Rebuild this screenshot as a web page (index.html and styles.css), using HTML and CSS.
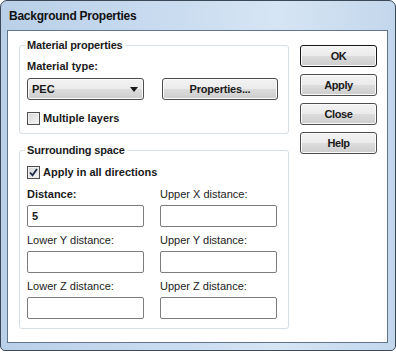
FILE: index.html
```html
<!DOCTYPE html>
<html lang="en">
<head>
<meta charset="UTF-8" />
<title>Background Properties</title>
<link rel="stylesheet" href="styles.css">
</head>
<body>
  <div class="window">
    <div class="titlebar">Background Properties</div>
    <div class="client">
      <div class="groups">
        <fieldset class="group group-material">
          <legend>Material properties</legend>
          <div class="label bold">Material type:</div>
          <div class="row">
            <div class="combo">
              <span>PEC</span>
              <svg width="8" height="5" viewBox="0 0 8 5"><path d="M0 0h8L4 5z" fill="#1a1a1a"/></svg>
            </div>
            <button class="btn btn-wide">Properties...</button>
          </div>
          <label class="check-row"><span class="check"></span>Multiple layers</label>
        </fieldset>

        <fieldset class="group group-space">
          <legend>Surrounding space</legend>
          <label class="check-row">
            <span class="check">
              <svg width="9" height="9" viewBox="0 0 9 9"><path d="M1 4.5l2.5 2.8L8 1" fill="none" stroke="#1c2a4a" stroke-width="1.8"/></svg>
            </span>Apply in all directions
          </label>
          <div class="fields">
            <div class="field">
              <div class="label bold">Distance:</div>
              <input type="text" class="edit" value="5">
            </div>
            <div class="field">
              <div class="label">Upper X distance:</div>
              <input type="text" class="edit">
            </div>
            <div class="field">
              <div class="label">Lower Y distance:</div>
              <input type="text" class="edit">
            </div>
            <div class="field">
              <div class="label">Upper Y distance:</div>
              <input type="text" class="edit">
            </div>
            <div class="field">
              <div class="label">Lower Z distance:</div>
              <input type="text" class="edit">
            </div>
            <div class="field">
              <div class="label">Upper Z distance:</div>
              <input type="text" class="edit">
            </div>
          </div>
        </fieldset>
      </div>

      <div class="actions">
        <button class="btn btn-default">OK</button>
        <button class="btn">Apply</button>
        <button class="btn">Close</button>
        <button class="btn">Help</button>
      </div>
    </div>
  </div>
</body>
</html>
```

FILE: styles.css
```css
* {
  box-sizing: border-box;
}
body {
  margin: 0;
  background: #fff;
  font-family: "Liberation Sans", Arial, sans-serif;
  font-size: 11px;
  color: #1a1a1a;
}

/* Window frame */
.window {
  width: 396px;
  height: 351px;
  border: 1px solid #3b4858;
  border-radius: 7px 7px 5px 5px;
  background: linear-gradient(90deg, #b9d0e8 0%, #cadcf0 45%, #d6e5f4 70%, #c3d7ec 100%);
  padding: 0 7px 7px 6px;
}
.titlebar {
  height: 29px;
  padding: 8px 0 0 2px;
  font-size: 12px;
  font-weight: bold;
  letter-spacing: -0.25px;
  line-height: 15px;
  color: #111;
}
.client {
  height: 313px;
  border: 1px solid #5f738a;
  background: #fff;
  display: flex;
  padding: 7px 0 0 11px;
}

/* Group boxes */
.groups {
  width: 270px;
}
.group {
  margin: 0;
  min-width: 0;
  border: 1px solid #d5dfe5;
  border-radius: 3px;
  padding: 7px 7px 8px 7px;
}
.group legend {
  padding: 0 2px;
  margin-left: -2px;
  line-height: 14px;
  font-weight: bold;
  letter-spacing: -0.15px;
}
.group-space {
  margin-top: 9px;
  padding-top: 9px;
  padding-bottom: 9px;
}

.label {
  line-height: 14px;
  white-space: nowrap;
  color: #222;
}
.bold {
  font-weight: bold;
  color: #1a1a1a;
}

.row {
  display: flex;
  gap: 18px;
  margin-top: 5px;
}

/* Buttons and combo */
.btn, .combo {
  height: 22px;
  border: 1px solid #4d4d4d;
  border-radius: 3px;
  background: linear-gradient(#f3f3f3 0%, #ebebeb 48%, #dcdcdc 52%, #cdcdcd 100%);
  box-shadow: inset 0 0 0 1px #fbfbfb;
  font-family: inherit;
  font-size: 11px;
  font-weight: bold;
  color: #1a1a1a;
  padding: 0;
}
.btn {
  letter-spacing: -0.4px;
}
.btn-default {
  border-color: #161616;
}
.btn-wide {
  width: 116px;
  letter-spacing: -0.2px;
}
.combo {
  width: 117px;
  display: flex;
  align-items: center;
  justify-content: space-between;
  padding: 0 5px 0 4px;
}

/* Checkboxes */
.check-row {
  display: flex;
  align-items: center;
  gap: 3px;
  height: 13px;
  margin-top: 12px;
  font-weight: bold;
  line-height: 13px;
}
.group-space .check-row {
  margin-top: 0;
}
.check {
  width: 13px;
  height: 13px;
  border: 1px solid #4f4f4f;
  background: linear-gradient(135deg, #d4d4d4, #f8f8f8);
  box-shadow: inset 0 0 0 1px #eeeeee;
  display: flex;
  align-items: center;
  justify-content: center;
}

/* Distance fields */
.fields {
  display: grid;
  grid-template-columns: 117px 117px;
  column-gap: 16px;
  row-gap: 6px;
  margin-top: 8px;
}
.edit {
  display: block;
  width: 117px;
  height: 22px;
  margin-top: 4px;
  border: 1px solid #7d7d7d;
  border-radius: 2px;
  padding: 0 4px;
  font-family: inherit;
  font-size: 11px;
  font-weight: bold;
  color: #1a1a1a;
  outline: none;
}

/* Dialog buttons */
.actions {
  margin-left: 11px;
  padding-top: 7px;
  display: flex;
  flex-direction: column;
  gap: 7px;
}
.actions .btn {
  width: 77px;
}
```
